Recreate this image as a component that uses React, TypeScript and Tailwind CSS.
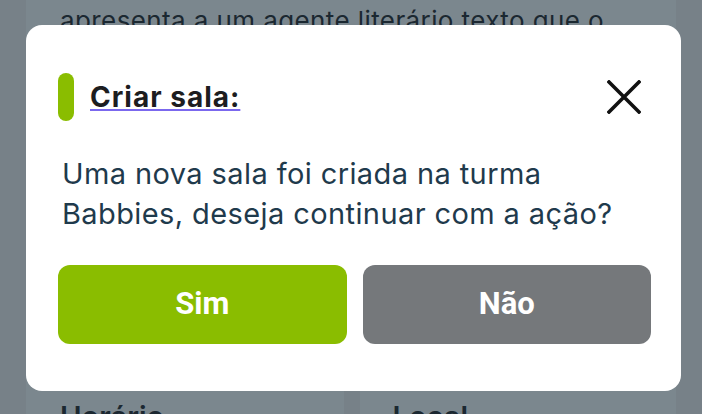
import React from 'react';

const CloseIcon: React.FC = () => (
  <svg width="34" height="34" viewBox="0 0 34 34" fill="none" stroke="#111111" strokeWidth="3.6" strokeLinecap="square">
    <path d="M2 2 L32 32 M32 2 L2 32" />
  </svg>
);

const CreateRoomDialog: React.FC = () => {
  return (
    <div className="absolute left-[26px] top-[25px] w-[655px] h-[366px] bg-white rounded-[16px] flex flex-col pt-[48px] pl-[32px] pr-[30px]">
      <div className="flex items-center h-[48px]">
        <div className="w-[16px] h-[48px] rounded-full bg-[#8abd00]" />
        <h2 className="ml-[16px] text-[28px] tracking-[1px] font-bold text-[#1d1d1f] underline decoration-[#7b68ee] decoration-[2px] underline-offset-[2px] leading-none">
          Criar sala:
        </h2>
        <button className="ml-auto mr-[10px] flex items-center justify-center">
          <CloseIcon />
        </button>
      </div>

      <p className="mt-[33px] text-[29px] tracking-[0.4px] leading-[40px] text-[#1f3a4c] pl-[4px]">
        Uma nova sala foi criada na turma
        <br />
        Babbies, deseja continuar com a ação?
      </p>

      <div className="mt-[31px] flex gap-[16px]">
        <button className="flex-1 h-[79px] rounded-[12px] bg-[#8abd00] text-white text-[31px] font-bold font-['Roboto',sans-serif]">
          Sim
        </button>
        <button className="flex-1 h-[79px] rounded-[12px] bg-[#75787b] text-white text-[31px] font-bold font-['Roboto',sans-serif]">
          Não
        </button>
      </div>
    </div>
  );
};

export default function App() {
  return (
    <div className="relative w-[702px] h-[414px] overflow-hidden bg-[#778188] font-['Inter',sans-serif]">
      <div className="ml-[26px] w-[650px] h-[380px] bg-[#7b878e] pt-[3px] pl-[34px]">
        <p className="text-[26px] tracking-[0.4px] leading-[36px] text-[#1b2831]">apresenta a um agente literário texto que o</p>
      </div>
      <div className="ml-[26px] w-[650px] flex gap-[16px]">
        <div className="flex-1 h-[34px] bg-[#7b878e] pl-[34px] pt-[22px]">
          <span className="block text-[29px] font-semibold text-[#1b2831] leading-none">Horário</span>
        </div>
        <div className="flex-1 h-[34px] bg-[#7b878e] pl-[33px] pt-[22px]">
          <span className="block text-[29px] font-semibold text-[#1b2831] leading-none">Local</span>
        </div>
      </div>
      <CreateRoomDialog />
    </div>
  );
}
